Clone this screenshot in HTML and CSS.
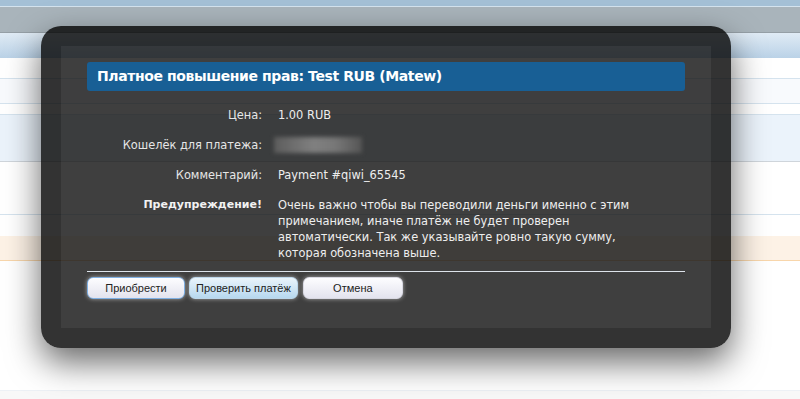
FILE: index.html
```html
<!DOCTYPE html>
<html lang="ru">
  <head>
    <meta charset="UTF-8" />
    <title>Платное повышение прав</title>
    <link rel="stylesheet" href="styles.css">
  </head>
  <body>
    <div class="page">
      <div class="topbar"></div>
      <div class="nav"></div>
      <div class="head"></div>
      <div class="row r1"></div>
      <div class="row r2"></div>
      <div class="row r3"></div>
      <div class="row r4"></div>
      <div class="row r5"></div>
      <div class="row r6"></div>
      <div class="row r7"></div>
      <div class="row r8"></div>
      <div class="footer"></div>
    </div>

    <div class="overlay">
      <div class="overlay-inner">
        <h2 class="title">Платное повышение прав: Test RUB (Matew)</h2>

        <dl class="info">
          <dt>Цена:</dt>
          <dd>1.00 RUB</dd>

          <dt>Кошелёк для платежа:</dt>
          <dd><span class="hidden-wallet"></span></dd>

          <dt>Комментарий:</dt>
          <dd>Payment #qiwi_65545</dd>

          <dt class="warn">Предупреждение!</dt>
          <dd class="warn-text">Очень важно чтобы вы переводили деньги именно с этим примечанием, иначе платёж не будет проверен автоматически. Так же указывайте ровно такую сумму, которая обозначена выше.</dd>
        </dl>

        <div class="buttons">
          <button class="btn focused">Приобрести</button>
          <button class="btn hovered">Проверить платёж</button>
          <button class="btn">Отмена</button>
        </div>
      </div>
    </div>
  </body>
</html>
```

FILE: styles.css
```css
* {
  box-sizing: border-box;
  margin: 0;
  padding: 0;
}

body {
  font-family: 'DejaVu Sans', sans-serif;
  background: #fff;
  overflow: hidden;
}

/* page behind the overlay */
.topbar {
  height: 7px;
  background: #a4c0d6;
  border-bottom: 1px solid #d4e3ee;
}

.nav {
  height: 26px;
  background: #a9b4bb;
  border-bottom: 1px solid #959fa6;
}

.head {
  height: 25px;
  background: linear-gradient(#e0ebf5, #bad2e7);
}

.row {
  border-bottom: 1px solid #d5e3ee;
}

.r1 { height: 21px; }
.r2 { height: 25px; background: #f8fafd; }
.r3 { height: 11px; }
.r4 { height: 47px; background: #ebf3fb; border-bottom-color: #cfd5db; }
.r5 { height: 53px; }
.r6 { height: 21px; border-bottom: none; }
.r7 { height: 25px; background: #fdf2e6; border-bottom-color: #f8d6ab; }
.r8 { height: 130px; border-bottom-color: #edf1f6; }

.footer {
  height: 10px;
  background: #f8f8f8;
}

/* overlay */
.overlay {
  position: absolute;
  top: 26px;
  left: 41px;
  width: 690px;
  height: 322px;
  padding: 20px;
  border-radius: 20px;
  background: rgba(0, 0, 0, 0.8);
  box-shadow: 0 14px 34px rgba(0, 0, 0, 0.6);
}

.overlay-inner {
  height: 100%;
  padding: 16px 26px 0;
  background: rgba(255, 255, 255, 0.06);
  color: #eee;
}

.title {
  height: 29px;
  padding-left: 10px;
  border-radius: 3px;
  background: #185f95;
  color: #fff;
  font-size: 14px;
  font-weight: bold;
  letter-spacing: -0.4px;
  line-height: 29px;
  margin-bottom: 16px;
}

.info {
  display: grid;
  grid-template-columns: 175px 375px;
  column-gap: 16px;
  row-gap: 14px;
  font-size: 11.4px;
  line-height: 16px;
  padding-bottom: 10px;
  border-bottom: 1px solid #dde3ea;
}

.info dt {
  text-align: right;
  color: #e6e6e6;
}

.info dt.warn {
  font-weight: bold;
  font-size: 11px;
  color: #f2f2f2;
}

.info dd {
  color: #eee;
}

.hidden-wallet {
  display: block;
  width: 88px;
  height: 16px;
  margin-left: -4px;
  background: linear-gradient(90deg, #5c5c5c, #808080 45%, #777 70%, #555);
  filter: blur(2px);
}

.buttons {
  display: flex;
  gap: 4px;
  padding-top: 5px;
}

.btn {
  min-width: 98px;
  height: 22px;
  padding: 0 6px;
  border: 1px solid #d8d8e2;
  border-radius: 6px;
  background: linear-gradient(#fdfdff, #e3e3ee);
  box-shadow: 0 0 4px rgba(255, 255, 255, 0.55);
  font-family: 'Liberation Sans', sans-serif;
  font-size: 11px;
  color: #222;
  cursor: pointer;
}

.btn.focused {
  border-color: #7fb0e3;
}

.btn.hovered {
  background: linear-gradient(#eaf4fb, #b7d8ef);
  border-color: #bcd6ea;
}

.btn + .btn + .btn {
  margin-left: 1px;
  min-width: 100px;
}
```
